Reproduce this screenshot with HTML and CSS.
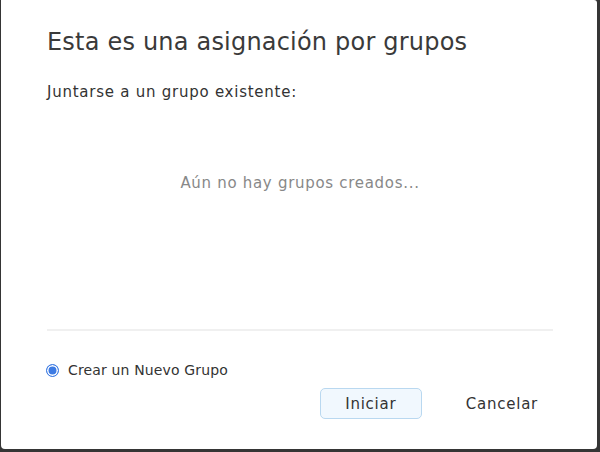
FILE: index.html
```html
<!doctype html>
<html>
  <head>
    <title>Asignación por grupos</title>
    <link rel="stylesheet" href="styles.css">
  </head>
  <body>
    <div class="dialog">
      <h1 class="title">Esta es una asignación por grupos</h1>
      <p class="subtitle">Juntarse a un grupo existente:</p>
      <div class="groups">
        <p class="empty">Aún no hay grupos creados...</p>
      </div>
      <label class="new_group">
        <span class="radio"></span>
        Crear un Nuevo Grupo
      </label>
      <div class="actions">
        <button class="btn primary">Iniciar</button>
        <button class="btn link">Cancelar</button>
      </div>
    </div>
  </body>
</html>
```

FILE: styles.css
```css
body {
  margin: 0;
  background-color: #353535;
  font-family: "DejaVu Sans", Verdana, sans-serif;
  color: #333;
}

.dialog {
  box-sizing: border-box;
  width: 596px;
  height: 449px;
  margin-left: 1px;
  background-color: #fff;
  border-radius: 0 3px 4px 4px;
  padding: 24px 44px 0 46px;
  display: flex;
  flex-direction: column;
}

.title {
  margin: 0;
  font-size: 24px;
  font-weight: normal;
  letter-spacing: 0.2px;
  line-height: 36px;
  color: #3a3a3a;
}

.subtitle {
  margin: 22px 0 0;
  font-size: 15px;
  letter-spacing: 0.75px;
  line-height: 20px;
}

.groups {
  box-sizing: border-box;
  height: 229px;
  padding-top: 71px;
  border-bottom: 2px solid #f0f0f0;
  text-align: center;
}

.empty {
  margin: 0;
  font-size: 15px;
  letter-spacing: 0.7px;
  line-height: 20px;
  color: #888;
}

.new_group {
  margin-top: 29px;
  display: flex;
  align-items: center;
  gap: 9px;
  font-size: 14px;
  letter-spacing: 0.15px;
  line-height: 20px;
}

.radio {
  box-sizing: border-box;
  width: 13px;
  height: 13px;
  margin-left: -1px;
  border-radius: 50%;
  background-color: #3d7be3;
  border: 1.5px solid #3d7be3;
  box-shadow: inset 0 0 0 1.5px #fff;
}

.actions {
  margin-top: 8px;
  display: flex;
  justify-content: flex-end;
  gap: 30px;
  padding-right: 1px;
}

.btn {
  font-family: inherit;
  font-size: 15px;
  letter-spacing: 0.75px;
  color: #333;
  height: 31px;
  cursor: pointer;
}

.primary {
  width: 102px;
  background-color: #f1f8fe;
  border: 1px solid #b9d8f0;
  border-radius: 5px;
}

.link {
  background: none;
  border: none;
  padding: 0 14px;
}
```
